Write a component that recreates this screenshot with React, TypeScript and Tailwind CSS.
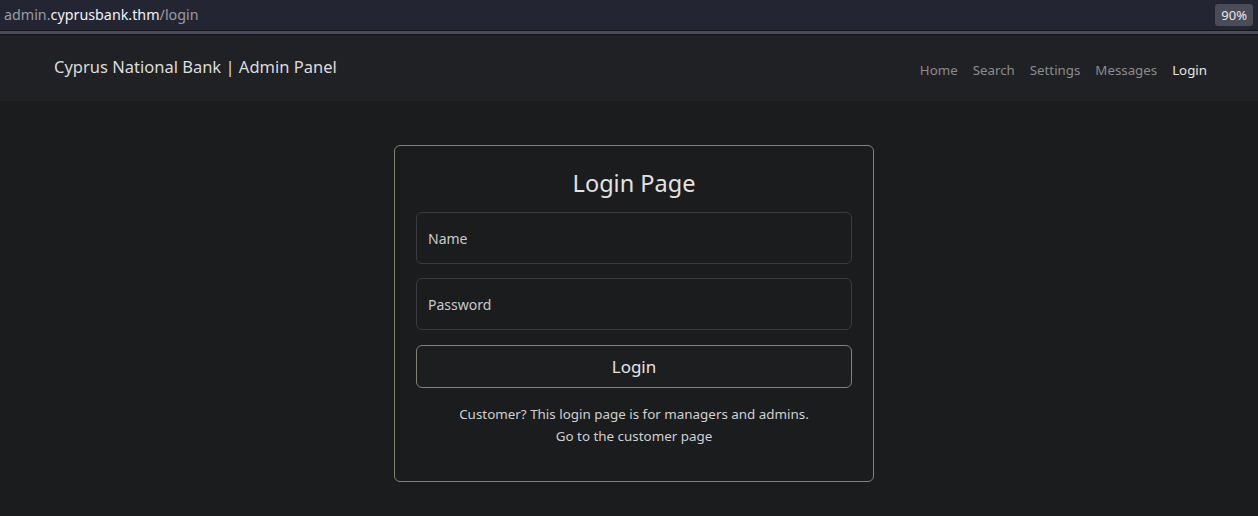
export default function App() {
  const font = { fontFamily: "'Noto Sans', 'Open Sans', sans-serif" };
  return (
    <div className="min-h-[516px] w-full bg-[#1b1c1e]" style={font}>
      {/* browser url bar */}
      <div className="flex h-[30px] items-center justify-between bg-[#232533] pl-1 pr-[5px]">
        <div className="text-[14.3px] leading-none text-[#9a9ba3]">
          admin.<span className="text-[#f2f2f4]">cyprusbank.thm</span>/login
        </div>
        <div className="rounded-[3px] bg-[#4a4c58] px-[6px] py-[3px] text-[13px] leading-[16px] text-[#e8e8ec]">
          90%
        </div>
      </div>
      <div className="h-px bg-[#15161c]" />
      <div className="h-[3px] bg-[#4a4c5a]" />
      <div className="h-px bg-[#15161c]" />

      {/* navbar */}
      <nav className="flex h-[66px] items-center justify-between bg-[#202124] pl-[54px] pr-[51px]">
        <div className="-mt-[2px] text-[16.5px] text-[#dcdcdc]">Cyprus National Bank | Admin Panel</div>
        <ul className="mt-[5px] flex gap-[15px] text-[13.3px] text-[#8c8c8c]">
          <li>Home</li>
          <li>Search</li>
          <li>Settings</li>
          <li>Messages</li>
          <li className="text-[#e6e6e6]">Login</li>
        </ul>
      </nav>

      {/* login card */}
      <div className="flex justify-center pl-[10px] pt-[44px]">
        <div className="w-[480px] rounded-[6px] border border-[#858270] bg-[#1b1c1e] px-[21px] pb-[34px] pt-[22px]">
          <h1 className="text-center text-[23.5px] leading-[30px] text-[#e2e2e2]">Login Page</h1>
          <div className="mt-[14px] flex flex-col gap-[14px]">
            <input
              placeholder="Name"
              className="h-[52px] w-full rounded-[6px] border border-[#3a3b3e] bg-[#1b1c1e] px-[11px] text-[14px] text-[#d0d0d0] outline-none placeholder:text-[#c9c9c9]"
            />
            <input
              type="password"
              placeholder="Password"
              className="h-[52px] w-full rounded-[6px] border border-[#3a3b3e] bg-[#1b1c1e] px-[11px] text-[14px] text-[#d0d0d0] outline-none placeholder:text-[#c9c9c9]"
            />
          </div>
          <button className="mt-[15px] h-[43px] w-full rounded-[6px] border border-[#858270] bg-[#1d1e20] text-[17px] text-[#e4e4e4]">
            Login
          </button>
          <div className="mt-[15px] text-center text-[13.4px] leading-[22px] text-[#d0d0d0]">
            <p>Customer? This login page is for managers and admins.</p>
            <p>Go to the customer page</p>
          </div>
        </div>
      </div>
    </div>
  );
}
